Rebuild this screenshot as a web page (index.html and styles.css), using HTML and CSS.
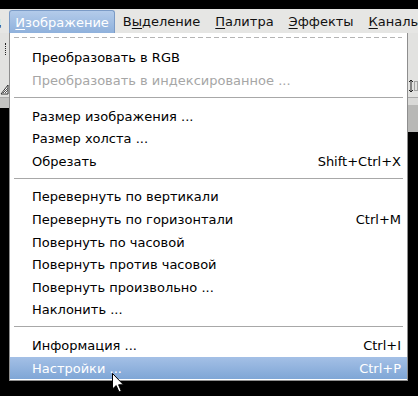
FILE: index.html
```html
<!DOCTYPE html>
<html lang="ru">
<head>
<meta charset="utf-8">
<title>Изображение</title>
<link rel="stylesheet" href="styles.css">
</head>
<body>
<div class="screen">
  <div class="topbar"></div>
  <nav class="menubar">
    <span class="mb-item mb-first">Вид</span>
    <span class="mb-item active"><u>И</u>зображение</span>
    <span class="mb-item">В<u>ы</u>деление</span>
    <span class="mb-item"><u>П</u>алитра</span>
    <span class="mb-item"><u>Э</u>ффекты</span>
    <span class="mb-item"><u>К</u>аналы</span>
  </nav>
  <div class="toolbar">
    <div class="tb-col tb-left">
      <span class="tb-dots"></span>
      <svg class="tb-hatch" width="9" height="12" viewBox="0 0 9 12"><path d="M1 11 L8 2 L8 11 Z" fill="#fff" stroke="#333" stroke-width="1"/><path d="M3 10 L8 5 M5 10 L8 7" stroke="#555" stroke-width="1"/></svg>
    </div>
    <div class="tb-col tb-right">
      <svg class="tb-arrows" width="10" height="14" viewBox="0 0 10 14"><path d="M3 1 V13 M1 3 L3 1 L5 3 M1 11 L3 13 L5 11" fill="none" stroke="#222" stroke-width="1"/><rect x="6.5" y="2.5" width="3" height="9" fill="none" stroke="#666" stroke-dasharray="1 1"/></svg>
    </div>
  </div>
  <div class="strip">
    <div class="strip-left"></div>
    <div class="strip-right"></div>
  </div>

  <div class="menu">
    <div class="tearoff"></div>
    <div class="item"><span class="label">Преобразовать в RGB</span></div>
    <div class="item disabled"><span class="label">Преобразовать в индексированное ...</span></div>
    <div class="sep"></div>
    <div class="item"><span class="label">Размер изображения ...</span></div>
    <div class="item"><span class="label">Размер холста ...</span></div>
    <div class="item"><span class="label">Обрезать</span><span class="accel">Shift+Ctrl+X</span></div>
    <div class="sep"></div>
    <div class="item"><span class="label">Перевернуть по вертикали</span></div>
    <div class="item"><span class="label">Перевернуть по горизонтали</span><span class="accel">Ctrl+M</span></div>
    <div class="item"><span class="label">Повернуть по часовой</span></div>
    <div class="item"><span class="label">Повернуть против часовой</span></div>
    <div class="item"><span class="label">Повернуть произвольно ...</span></div>
    <div class="item"><span class="label">Наклонить ...</span></div>
    <div class="sep"></div>
    <div class="item"><span class="label">Информация ...</span><span class="accel">Ctrl+I</span></div>
    <div class="item selected"><span class="label">Настройки ...</span><span class="accel">Ctrl+P</span></div>
  </div>

  <svg class="cursor" width="13" height="20" viewBox="0 0 13 20"><path d="M0.5 0.5 L0.5 16 L4.2 12.6 L7 19 L9.3 18 L6.6 11.8 L11.5 11.8 Z" fill="#fff" stroke="#000" stroke-width="1" stroke-linejoin="miter"/></svg>
</div>
</body>
</html>
```
FILE: styles.css
```css
html, body {
  margin: 0;
  padding: 0;
  background: #000;
}
.screen {
  position: relative;
  width: 418px;
  height: 396px;
  overflow: hidden;
  background: #000;
  font-family: "DejaVu Sans", "Noto Sans", sans-serif;
  font-size: 13px;
  color: #000;
}
.topbar {
  height: 9px;
  background: #000;
}
.menubar {
  display: flex;
  align-items: stretch;
  gap: 1px;
  height: 24px;
  background: #e6e6e4;
  white-space: nowrap;
  overflow: hidden;
}
.mb-item {
  display: flex;
  align-items: center;
  padding: 0 7px;
  height: 24px;
  box-sizing: border-box;
  color: #111;
}
.mb-first {
  margin-left: -32px;
}
.mb-item u {
  text-decoration-thickness: 1px;
  text-underline-offset: 2px;
}
.mb-item.active {
  margin-top: 1px;
  height: 23px;
  padding: 0 5px;
  border: 1px solid #7b9bc6;
  border-bottom: none;
  border-radius: 3px 3px 0 0;
  background: linear-gradient(#b3cbea, #8fb1dc);
  color: #fff;
}
.toolbar {
  display: flex;
  justify-content: space-between;
  height: 64px;
  background: #e2e2e0;
  border-bottom: 1px solid #a9a9a9;
}
.tb-col {
  width: 10px;
  display: flex;
  flex-direction: column;
  align-items: center;
}
.tb-left {
  width: 9px;
}
.tb-dots {
  margin-top: 10px;
  width: 3px;
  height: 12px;
  border-left: 1px dotted #222;
  margin-left: 4px;
}
.tb-hatch {
  margin-top: 28px;
}
.tb-arrows {
  margin-top: 46px;
}
.strip {
  display: flex;
  justify-content: space-between;
}
.strip-left {
  width: 9px;
  height: 10px;
  background: #c3c3c1;
}
.strip-right {
  width: 10px;
  height: 34px;
  background: linear-gradient(#d9d9d7 0 20%, #b8b8b6 20%);
}

.menu {
  position: absolute;
  left: 9px;
  top: 33px;
  width: 399px;
  box-sizing: border-box;
  background: #fff;
  border: 1px solid #8e8e8e;
  border-top: none;
  padding-bottom: 1px;
}
.tearoff {
  height: 13.7px;
  box-sizing: border-box;
  padding-top: 4px;
}
.tearoff::before {
  content: "";
  display: block;
  margin: 0 5px 0 4px;
  height: 1px;
  background: repeating-linear-gradient(90deg, #b4b4b4 0 5px, transparent 5px 8px);
}
.item {
  display: flex;
  align-items: center;
  justify-content: space-between;
  height: 22.6px;
  padding: 0 6px 0 22px;
  white-space: nowrap;
}
.item.disabled {
  color: #a6a6a6;
}
.item.selected {
  background: linear-gradient(#a4c0e6, #7fa6d6);
  color: #fff;
}
.accel {
  color: inherit;
}
.sep {
  height: 1px;
  margin: 5px 4px 7px 4px;
  background: #a8a8a8;
}
.cursor {
  position: absolute;
  left: 112px;
  top: 373px;
}
```
